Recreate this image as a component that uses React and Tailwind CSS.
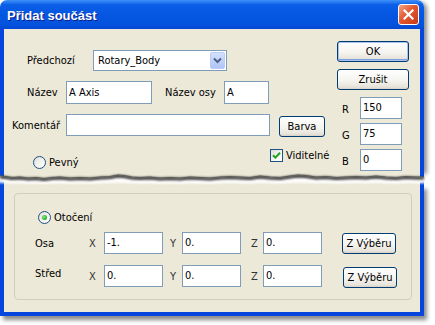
// Přidat součást — XP-style dialog, torn in the middle
const TEAR = [
  [0, 4], [6, 4.5], [12, 5.5], [20, 5], [28, 6], [36, 5.5], [44, 6.5], [52, 5.5], [60, 5],
  [70, 6], [80, 5.5], [90, 6], [100, 5], [110, 4.5], [118, 3], [124, 3.5], [132, 5],
  [140, 5.5], [150, 5], [160, 6], [170, 5.5], [180, 6], [190, 5], [200, 5.5], [210, 6],
  [220, 5], [230, 4.5], [240, 5], [250, 5.5], [260, 4], [270, 5], [280, 5.5], [290, 4],
  [298, 3], [306, 3.5], [316, 5], [326, 4.5], [336, 5.5], [346, 5], [356, 4.5], [366, 5],
  [376, 4], [386, 5], [396, 5.5], [406, 4.5], [416, 5], [424, 5],
];

function Tear() {
  const edge = TEAR.map(([x, y]) => `${x},${y}`).join(' ');
  const shadow = TEAR.map(([x, y]) => `${x},${y + 1.2}`).join(' ');
  const light = TEAR.map(([x, y]) => `${x},${y + 4}`).join(' ');
  const top = `0,0 424,0 ${[...TEAR].reverse().map(([x, y]) => `${x},${y}`).join(' ')}`;
  return (
    <div className="h-[13px] w-[424px]">
      <svg width="424" height="13" viewBox="0 0 424 13" className="block overflow-visible">
        <defs>
          <filter id="soft" x="-5%" y="-100%" width="110%" height="300%">
            <feGaussianBlur stdDeviation="0.8" />
          </filter>
          <linearGradient id="fade" x1="0" y1="0" x2="0" y2="1">
            <stop offset="0" stopColor="#ffffff" />
            <stop offset="1" stopColor="#ECE9D8" />
          </linearGradient>
          <linearGradient id="fadeBlue" x1="0" y1="0" x2="0" y2="1">
            <stop offset="0" stopColor="#ffffff" />
            <stop offset="1" stopColor="#0746DD" />
          </linearGradient>
        </defs>
        <rect x="4" y="8" width="416" height="5" fill="url(#fade)" />
        <rect x="0" y="8" width="4" height="5" fill="url(#fadeBlue)" />
        <rect x="420" y="8" width="4" height="5" fill="url(#fadeBlue)" />
        <polygon points={top} fill="#ECE9D8" />
        <polygon points={`0,0 4,0 4,${TEAR[0][1] + 0.4} 0,${TEAR[0][1]}`} fill="#0746DD" />
        <polygon points="420,0 424,0 424,5 420,4.8" fill="#0746DD" />
        <polyline points={light} fill="none" stroke="#ffffff" strokeWidth="3" filter="url(#soft)" />
        <polyline points={shadow} fill="none" stroke="#333333" strokeWidth="2.8" filter="url(#soft)" />
        <polyline points={edge} fill="none" stroke="#5e5e58" strokeWidth="1.2" />
      </svg>
    </div>
  );
}

function TextBox({ className, value }) {
  return (
    <div className={`bg-white border border-[#7F9DB9] flex items-center pl-[2px] pb-[1px] shrink-0 ${className}`}>
      {value}
    </div>
  );
}

function Button({ className, children, isDefault }) {
  return (
    <div
      className={`border border-[#003C74] rounded-[3px] flex items-center justify-center shrink-0 bg-[linear-gradient(180deg,#ffffff_0%,#F5F4EF_55%,#E6E3DA_90%,#D6D0C5_100%)] ${
        isDefault ? 'shadow-[inset_0_0_0_1px_#A9C1EC,inset_0_-1px_0_1px_#7EA0DF]' : ''
      } ${className}`}
    >
      {children}
    </div>
  );
}

function Radio({ checked }) {
  return (
    <div className="w-[13px] h-[13px] rounded-full border border-[#1C5180] bg-[linear-gradient(135deg,#DCDCD7_0%,#F2F2EF_50%,#ffffff_100%)] flex items-center justify-center shrink-0">
      {checked && (
        <div className="w-[5px] h-[5px] rounded-full bg-[radial-gradient(circle_at_40%_40%,#8BEA88_0%,#2DB42A_60%,#1F8F1C_100%)]" />
      )}
    </div>
  );
}

function Checkbox() {
  return (
    <div className="w-[13px] h-[13px] border border-[#1C5180] bg-[linear-gradient(135deg,#DCDCD7_0%,#F6F6F3_60%,#ffffff_100%)] flex items-center justify-center shrink-0">
      <svg width="9" height="9" viewBox="0 0 9 9">
        <path d="M1 4.2 L3.4 6.6 L8 1.8" fill="none" stroke="#21A121" strokeWidth="2" />
      </svg>
    </div>
  );
}

function Combo() {
  return (
    <div className="w-[134px] h-[21px] bg-white border border-[#7F9DB9] flex items-center justify-between pl-[4px] pr-[1px] shrink-0">
      <span>Rotary_Body</span>
      <div className="w-[15px] h-[17px] rounded-[2px] border border-[#B9CDF6] bg-[linear-gradient(180deg,#D3E1FC_0%,#C1D3FB_50%,#AFC5F6_100%)] flex items-center justify-center">
        <svg width="9" height="7" viewBox="0 0 9 7">
          <path d="M1 1.5 L4.5 5 L8 1.5" fill="none" stroke="#4D6185" strokeWidth="2" />
        </svg>
      </div>
    </div>
  );
}

function XYZRow({ label, x, y, z, btnMl, labelUp }) {
  return (
    <div className="h-[22px] flex items-center">
      <span className={`ml-[20px] w-[54px] ${labelUp ? 'mb-[6px]' : ''}`}>{label}</span>
      <span className="w-[15px] text-[#333]">X</span>
      <TextBox className="w-[59px] h-[22px]" value={x} />
      <span className="w-[19px] pl-[7px] text-[#333]">Y</span>
      <TextBox className="w-[59px] h-[22px]" value={y} />
      <span className="w-[22px] pl-[10px] text-[#333]">Z</span>
      <TextBox className="w-[59px] h-[22px]" value={z} />
      <Button className={`${btnMl} w-[54px] h-[21px]`}>Z Výběru</Button>
    </div>
  );
}

function RGBRow({ label, value, mt }) {
  return (
    <div className={`h-[22px] flex items-center ${mt}`}>
      <span className="ml-[5px] w-[18px] pt-[3px]">{label}</span>
      <TextBox className="w-[42px] h-[22px]" value={value} />
    </div>
  );
}

export default function App() {
  return (
    <div className="w-[435px] h-[325px] bg-white overflow-hidden font-['DejaVu_Sans_Condensed','Liberation_Sans',sans-serif] text-[11px] text-black leading-none">
      <div className="w-[424px] flex flex-col">
        {/* title + upper part */}
        <div className="rounded-t-[7px] shadow-[3px_2px_4px_rgba(0,0,0,0.45)]">
          <div className="h-[29px] rounded-t-[7px] flex items-center justify-between pl-[7px] pr-[5px] bg-[linear-gradient(180deg,#3D8FF7_0%,#2A7DF2_7%,#0B5EE6_16%,#0557E3_50%,#0352DC_85%,#0448D4_100%)]">
            <span className="font-['Liberation_Sans',sans-serif] text-white font-bold text-[13px] pt-[2px] [text-shadow:1px_1px_#0F1A8A]">Přidat součást</span>
            <div className="w-[21px] h-[21px] rounded-[3px] border border-white flex items-center justify-center bg-[linear-gradient(135deg,#F2A487_0%,#E2582F_45%,#C63A16_100%)]">
              <svg width="11" height="11" viewBox="0 0 11 11">
                <path d="M1.5 1.5 L9.5 9.5 M9.5 1.5 L1.5 9.5" stroke="#ffffff" strokeWidth="2.2" strokeLinecap="square" />
              </svg>
            </div>
          </div>
          <div className="h-[143px] flex border-x-4 border-[#0746DD] bg-[#ECE9D8]">
            <div className="w-[329px] flex flex-col">
              <div className="mt-[21px] h-[21px] flex items-center">
                <span className="ml-[23px] w-[66px]">Předchozí</span>
                <Combo />
              </div>
              <div className="mt-[10px] h-[23px] flex items-center">
                <span className="ml-[23px] w-[39px]">Název</span>
                <TextBox className="w-[86px] h-[23px]" value="A Axis" />
                <span className="ml-[13px] w-[59px]">Název osy</span>
                <TextBox className="w-[45px] h-[23px]" value="A" />
              </div>
              <div className="mt-[10px] h-[22px] flex items-center">
                <span className="ml-[8px] w-[54px]">Komentář</span>
                <TextBox className="w-[204px] h-[22px]" value="" />
                <Button className="ml-[9px] w-[46px] h-[21px] mt-[2px]">Barva</Button>
              </div>
              <div className="mt-[13px] h-[23px] flex">
                <div className="ml-[29px] w-[237px] self-end mb-[3px] flex items-center gap-[3px]">
                  <Radio />
                  <span>Pevný</span>
                </div>
                <div className="flex items-center gap-[3px] self-start">
                  <Checkbox />
                  <span>Viditelné</span>
                </div>
              </div>
            </div>
            <div className="ml-[4px] w-[72px] pt-[12px] flex flex-col">
              <Button isDefault className="w-[72px] h-[21px]">OK</Button>
              <Button className="mt-[7px] w-[72px] h-[21px]">Zrušit</Button>
              <RGBRow label="R" value="150" mt="mt-[7px]" />
              <RGBRow label="G" value="75" mt="mt-[4px]" />
              <RGBRow label="B" value="0" mt="mt-[4px]" />
            </div>
          </div>
        </div>

        <Tear />

        {/* lower part */}
        <div className="h-[131px] border-x-4 border-b-4 border-[#0746DD] bg-[#ECE9D8] pt-[8px] pl-[10px] shadow-[3px_4px_4px_rgba(0,0,0,0.45)]">
          <div className="w-[398px] h-[107px] border border-[#D0D0BF] rounded-[4px] flex flex-col">
            <div className="mt-[17px] ml-[23px] h-[13px] flex items-center gap-[3px]">
              <Radio checked />
              <span>Otočení</span>
            </div>
            <div className="mt-[8px]">
              <XYZRow label="Osa" x="-1." y="0." z="0." btnMl="ml-[20px]" />
            </div>
            <div className="mt-[11px]">
              <XYZRow label="Střed" x="0." y="0." z="0." btnMl="ml-[21px] mt-[2px]" labelUp />
            </div>
          </div>
        </div>
      </div>
    </div>
  );
}
